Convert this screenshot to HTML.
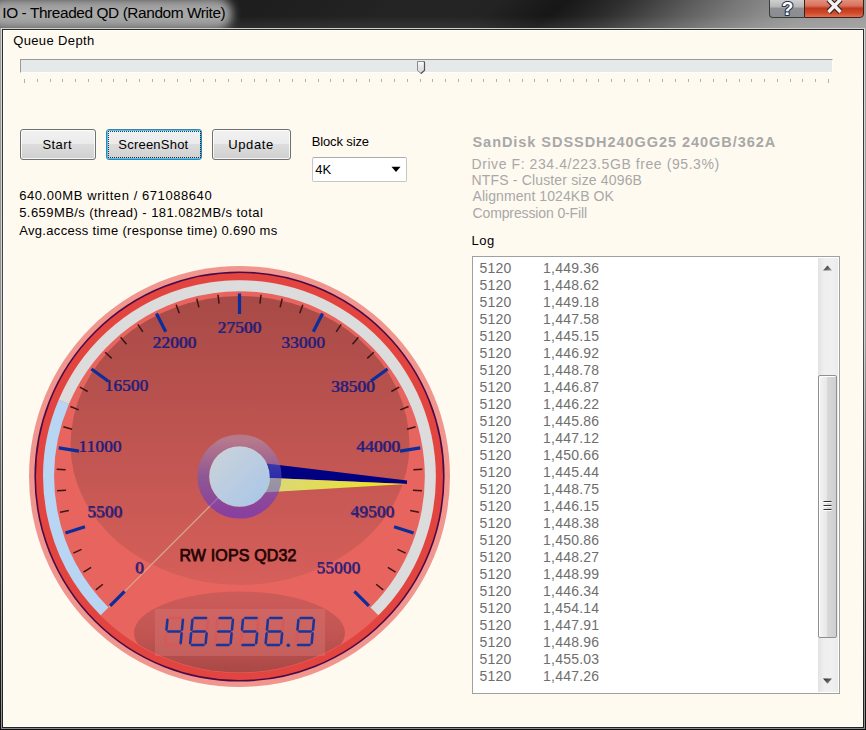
<!DOCTYPE html>
<html><head><meta charset="utf-8"><style>
html,body{margin:0;padding:0;width:866px;height:730px;overflow:hidden;background:#fffaf0;position:relative;}
.t{position:absolute;white-space:nowrap;line-height:1;font-family:"Liberation Sans",sans-serif;}
.abs{position:absolute;}
.gauge{position:absolute;left:0;top:0;}
.gl{font-family:"Liberation Serif",serif;font-size:17px;letter-spacing:0.25px;}
.rw{font-family:"Liberation Sans",sans-serif;font-size:16px;letter-spacing:0.15px;}
.lg{font-size:14px;color:#6e6e6e;letter-spacing:0.2px;}
#tb{left:0;top:0;width:866px;height:28px;background:#1c1c1c;}
#tbg{left:-40px;top:0;width:946px;height:28px;transform:skewX(-48deg);transform-origin:0 100%;background:linear-gradient(90deg,#1c1c1c 0px,#1e1e1e 280px,#242424 420px,#232323 510px,#191919 560px,#171717 575px,#222 605px,#303030 635px,#464646 670px,#606060 710px,#787878 750px,#8c8c8c 790px,#999 830px,#a0a0a0 946px);}
#tbv{left:0;top:0;width:866px;height:28px;background:linear-gradient(rgba(255,255,255,0) 55%,rgba(255,255,255,0.07));}
#glow{left:-12px;top:-3px;width:244px;height:34px;border-radius:16px;background:linear-gradient(#8e8e8e,#a9a9a9 40%,#a9a9a9 62%,#8a8a8a);filter:blur(5px);}
.btn{position:absolute;box-sizing:border-box;height:31px;top:129px;border:1px solid #707070;border-radius:3px;background:linear-gradient(#f2f2f2 0%,#ebebeb 48%,#dddddd 50%,#cfcfcf 100%);box-shadow:inset 0 0 0 1px rgba(255,255,255,0.8);}
</style></head><body>
<div class="abs" id="tb" style="overflow:hidden"><div class="abs" id="tbg"></div><div class="abs" id="tbv"></div><div class="abs" id="glow"></div></div>
<div class="abs" style="left:0;top:28px;width:866px;height:1px;background:#cfcfcf"></div>
<div class="abs" style="left:0;top:29px;width:866px;height:1px;background:#2c2c2c"></div>
<div class="abs" style="left:0;top:28px;width:1px;height:702px;background:linear-gradient(#a0a0a0,#8c8c8e 48%,#282828 85%,#101010)"></div>
<div class="abs" style="left:1px;top:28px;width:1px;height:701px;background:linear-gradient(#d8d8d8,#d0d0d2 48%,#a8a8a8 85%,#909090)"></div>
<div class="abs" style="left:2px;top:29px;width:1px;height:699px;background:linear-gradient(#2a2a2a,#4c4c4c 45%,#282828 85%,#202020)"></div>
<div class="abs" style="left:863px;top:29px;width:1px;height:699px;background:linear-gradient(#2a2a2a,#505050 40%,#282828 85%,#202020)"></div>
<div class="abs" style="left:864px;top:28px;width:1px;height:701px;background:linear-gradient(#d8d8d8,#d0d0d0 45%,#a8a8a8 85%,#909090)"></div>
<div class="abs" style="left:865px;top:28px;width:1px;height:702px;background:linear-gradient(#a0a0a0,#9c9c9c 45%,#282828 85%,#101010)"></div>
<div class="abs" style="left:2px;top:727px;width:862px;height:1px;background:#222"></div>
<div class="abs" style="left:1px;top:728px;width:864px;height:1px;background:#8c8c8c"></div>
<div class="abs" style="left:0;top:729px;width:866px;height:1px;background:#0c0c0c"></div>
<div class="abs" style="left:3px;top:30px;width:860px;height:1px;background:#fffef9"></div>
<div class="abs" style="left:3px;top:30px;width:1px;height:697px;background:#fffef9"></div>
<div class="abs" style="left:862px;top:30px;width:1px;height:697px;background:#fffef9"></div>
<div class="abs" style="left:3px;top:726px;width:860px;height:1px;background:#fffef9"></div>
<!-- caption buttons -->
<div class="abs" style="left:769px;top:-3px;width:35px;height:21px;box-sizing:border-box;border:1px solid #3c3c3c;border-right:none;border-radius:0 0 0 4px;background:linear-gradient(#d6d6d6 0%,#b8b8b8 45%,#8e9094 55%,#8a8c92 100%);"></div>
<div class="abs" style="left:804px;top:-3px;width:60px;height:21px;box-sizing:border-box;border:1px solid #3c2020;border-radius:0 0 4px 0;background:linear-gradient(#e89a88 0%,#d8735e 40%,#c0391c 55%,#d24a2c 80%,#e07050 100%);"></div>
<svg class="abs" style="left:769px;top:0" width="95" height="19" viewBox="0 0 95 19">
<text x="18.6" y="15.2" font-family="Liberation Sans" font-size="19" font-weight="bold" text-anchor="middle" fill="#fff" stroke="#28324e" stroke-width="2.2" paint-order="stroke" stroke-linejoin="round">?</text>
<path d="M59.5,-0.5 L71.5,12 M71.5,-0.5 L59.5,12" stroke="#2e2020" stroke-width="5.6" stroke-linecap="butt"/>
<path d="M59.5,-0.5 L71.5,12 M71.5,-0.5 L59.5,12" stroke="#f2f2f2" stroke-width="3.4" stroke-linecap="butt"/>
</svg>
<!-- slider -->
<div class="abs" style="left:20px;top:59px;width:813px;height:14px;box-sizing:border-box;border-top:1px solid #9a9a9a;border-left:1px solid #9a9a9a;border-bottom:1px solid #fdfdfd;border-right:1px solid #fdfdfd;background:#e6e9ea"></div>
<div style="position:absolute;left:24px;top:79px;width:1px;height:4px;background:#b0b0b0"></div>
<div style="position:absolute;left:37px;top:79px;width:1px;height:3px;background:#b0b0b0"></div>
<div style="position:absolute;left:50px;top:79px;width:1px;height:3px;background:#b0b0b0"></div>
<div style="position:absolute;left:62px;top:79px;width:1px;height:3px;background:#b0b0b0"></div>
<div style="position:absolute;left:75px;top:79px;width:1px;height:3px;background:#b0b0b0"></div>
<div style="position:absolute;left:88px;top:79px;width:1px;height:3px;background:#b0b0b0"></div>
<div style="position:absolute;left:101px;top:79px;width:1px;height:3px;background:#b0b0b0"></div>
<div style="position:absolute;left:113px;top:79px;width:1px;height:3px;background:#b0b0b0"></div>
<div style="position:absolute;left:126px;top:79px;width:1px;height:3px;background:#b0b0b0"></div>
<div style="position:absolute;left:139px;top:79px;width:1px;height:3px;background:#b0b0b0"></div>
<div style="position:absolute;left:152px;top:79px;width:1px;height:3px;background:#b0b0b0"></div>
<div style="position:absolute;left:164px;top:79px;width:1px;height:3px;background:#b0b0b0"></div>
<div style="position:absolute;left:177px;top:79px;width:1px;height:3px;background:#b0b0b0"></div>
<div style="position:absolute;left:190px;top:79px;width:1px;height:3px;background:#b0b0b0"></div>
<div style="position:absolute;left:203px;top:79px;width:1px;height:3px;background:#b0b0b0"></div>
<div style="position:absolute;left:215px;top:79px;width:1px;height:3px;background:#b0b0b0"></div>
<div style="position:absolute;left:228px;top:79px;width:1px;height:3px;background:#b0b0b0"></div>
<div style="position:absolute;left:241px;top:79px;width:1px;height:3px;background:#b0b0b0"></div>
<div style="position:absolute;left:254px;top:79px;width:1px;height:3px;background:#b0b0b0"></div>
<div style="position:absolute;left:266px;top:79px;width:1px;height:3px;background:#b0b0b0"></div>
<div style="position:absolute;left:279px;top:79px;width:1px;height:3px;background:#b0b0b0"></div>
<div style="position:absolute;left:292px;top:79px;width:1px;height:3px;background:#b0b0b0"></div>
<div style="position:absolute;left:305px;top:79px;width:1px;height:3px;background:#b0b0b0"></div>
<div style="position:absolute;left:318px;top:79px;width:1px;height:3px;background:#b0b0b0"></div>
<div style="position:absolute;left:330px;top:79px;width:1px;height:3px;background:#b0b0b0"></div>
<div style="position:absolute;left:343px;top:79px;width:1px;height:3px;background:#b0b0b0"></div>
<div style="position:absolute;left:356px;top:79px;width:1px;height:3px;background:#b0b0b0"></div>
<div style="position:absolute;left:369px;top:79px;width:1px;height:3px;background:#b0b0b0"></div>
<div style="position:absolute;left:381px;top:79px;width:1px;height:3px;background:#b0b0b0"></div>
<div style="position:absolute;left:394px;top:79px;width:1px;height:3px;background:#b0b0b0"></div>
<div style="position:absolute;left:407px;top:79px;width:1px;height:3px;background:#b0b0b0"></div>
<div style="position:absolute;left:420px;top:79px;width:1px;height:3px;background:#b0b0b0"></div>
<div style="position:absolute;left:432px;top:79px;width:1px;height:3px;background:#b0b0b0"></div>
<div style="position:absolute;left:445px;top:79px;width:1px;height:3px;background:#b0b0b0"></div>
<div style="position:absolute;left:458px;top:79px;width:1px;height:3px;background:#b0b0b0"></div>
<div style="position:absolute;left:471px;top:79px;width:1px;height:3px;background:#b0b0b0"></div>
<div style="position:absolute;left:483px;top:79px;width:1px;height:3px;background:#b0b0b0"></div>
<div style="position:absolute;left:496px;top:79px;width:1px;height:3px;background:#b0b0b0"></div>
<div style="position:absolute;left:509px;top:79px;width:1px;height:3px;background:#b0b0b0"></div>
<div style="position:absolute;left:522px;top:79px;width:1px;height:3px;background:#b0b0b0"></div>
<div style="position:absolute;left:534px;top:79px;width:1px;height:3px;background:#b0b0b0"></div>
<div style="position:absolute;left:547px;top:79px;width:1px;height:3px;background:#b0b0b0"></div>
<div style="position:absolute;left:560px;top:79px;width:1px;height:3px;background:#b0b0b0"></div>
<div style="position:absolute;left:573px;top:79px;width:1px;height:3px;background:#b0b0b0"></div>
<div style="position:absolute;left:586px;top:79px;width:1px;height:3px;background:#b0b0b0"></div>
<div style="position:absolute;left:598px;top:79px;width:1px;height:3px;background:#b0b0b0"></div>
<div style="position:absolute;left:611px;top:79px;width:1px;height:3px;background:#b0b0b0"></div>
<div style="position:absolute;left:624px;top:79px;width:1px;height:3px;background:#b0b0b0"></div>
<div style="position:absolute;left:637px;top:79px;width:1px;height:3px;background:#b0b0b0"></div>
<div style="position:absolute;left:649px;top:79px;width:1px;height:3px;background:#b0b0b0"></div>
<div style="position:absolute;left:662px;top:79px;width:1px;height:3px;background:#b0b0b0"></div>
<div style="position:absolute;left:675px;top:79px;width:1px;height:3px;background:#b0b0b0"></div>
<div style="position:absolute;left:688px;top:79px;width:1px;height:3px;background:#b0b0b0"></div>
<div style="position:absolute;left:700px;top:79px;width:1px;height:3px;background:#b0b0b0"></div>
<div style="position:absolute;left:713px;top:79px;width:1px;height:3px;background:#b0b0b0"></div>
<div style="position:absolute;left:726px;top:79px;width:1px;height:3px;background:#b0b0b0"></div>
<div style="position:absolute;left:739px;top:79px;width:1px;height:3px;background:#b0b0b0"></div>
<div style="position:absolute;left:751px;top:79px;width:1px;height:3px;background:#b0b0b0"></div>
<div style="position:absolute;left:764px;top:79px;width:1px;height:3px;background:#b0b0b0"></div>
<div style="position:absolute;left:777px;top:79px;width:1px;height:3px;background:#b0b0b0"></div>
<div style="position:absolute;left:790px;top:79px;width:1px;height:3px;background:#b0b0b0"></div>
<div style="position:absolute;left:802px;top:79px;width:1px;height:3px;background:#b0b0b0"></div>
<div style="position:absolute;left:815px;top:79px;width:1px;height:3px;background:#b0b0b0"></div>
<div style="position:absolute;left:828px;top:79px;width:1px;height:4px;background:#b0b0b0"></div>
<svg class="abs" style="left:414px;top:58px" width="14" height="18" viewBox="0 0 14 18">
<path d="M3.5,3.5 H9.5 Q10.5,3.5 10.5,4.5 V12.5 L7,15.5 L3.5,12.5 Z" fill="url(#thg)" stroke="#8a8a8a" stroke-width="1"/><path d="M9.5,3.5 Q10.5,3.5 10.5,4.5 V12.5 L7,15.5" fill="none" stroke="#555" stroke-width="1.2"/>
<defs><linearGradient id="thg" x1="0" y1="0" x2="0" y2="1"><stop offset="0" stop-color="#fdfdfd"/><stop offset="0.45" stop-color="#e6e6e6"/><stop offset="1" stop-color="#d6d6d6"/></linearGradient></defs>
</svg>
<!-- buttons -->
<div class="btn" style="left:20px;width:76px"></div>
<div class="btn" style="left:106px;width:96px;border-color:#3c7fb1;box-shadow:inset 0 0 0 1px #48c8f5;"></div>
<div class="abs" style="left:108px;top:131px;width:93px;height:27px;background:linear-gradient(90deg,#111 50%,transparent 50%) 0 0/2px 1px repeat-x,linear-gradient(90deg,#111 50%,transparent 50%) 0 100%/2px 1px repeat-x,linear-gradient(#111 50%,transparent 50%) 0 0/1px 2px repeat-y,linear-gradient(#111 50%,transparent 50%) 100% 0/1px 2px repeat-y;opacity:0.85"></div>
<div class="btn" style="left:212px;width:79px"></div>
<!-- combo -->
<div class="abs" style="left:312px;top:157px;width:95px;height:25px;box-sizing:border-box;border:1px solid #c6c6c6;border-top-color:#acacac;background:#fff;border-radius:2px"></div>
<svg class="abs" style="left:390px;top:165px" width="12" height="8" viewBox="0 0 12 8"><path d="M1.5,1.8 H10.5 L6,7 Z" fill="#000"/></svg>
<!-- listbox -->
<div class="abs" style="left:472px;top:256px;width:368px;height:438px;box-sizing:border-box;border:1px solid #a0a0a0;background:#fff"></div>
<div class="abs" style="left:818px;top:258px;width:20px;height:434px;background:linear-gradient(90deg,#e2e2e2,#efefef 30%,#f0f0f0 70%,#ebebeb)"></div>
<div class="abs" style="left:818px;top:375px;width:19px;height:263px;box-sizing:border-box;border:1px solid #8e8f8f;border-radius:2px;background:linear-gradient(90deg,#f4f4f4 0%,#e8e8e8 45%,#d8d8d8 50%,#cfcfcf 100%);box-shadow:inset 1px 1px 0 #fff"></div>
<svg class="abs" style="left:818px;top:258px" width="20" height="434" viewBox="0 0 20 434">
<defs><linearGradient id="ar" x1="0" y1="0" x2="1" y2="1"><stop offset="0" stop-color="#222"/><stop offset="1" stop-color="#9a9a9a"/></linearGradient></defs>
<path d="M5,12.5 L9.5,7.5 L14,12.5 Z" fill="url(#ar)"/>
<path d="M5,420.5 L14,420.5 L9.5,425.8 Z" fill="url(#ar)"/>
<path d="M5.5,243.5 H13.5 M5.5,247.5 H13.5 M5.5,251.5 H13.5" stroke="#333" stroke-width="1.2"/>
<path d="M5.5,244.5 H13.5 M5.5,248.5 H13.5 M5.5,252.5 H13.5" stroke="#fff" stroke-width="1"/>
</svg>
<div class="t lg" style="left:479.6px;top:260.65px">5120</div><div class="t lg" style="left:543.1px;top:260.65px">1,449.36</div>
<div class="t lg" style="left:479.6px;top:277.65px">5120</div><div class="t lg" style="left:543.1px;top:277.65px">1,448.62</div>
<div class="t lg" style="left:479.6px;top:294.65px">5120</div><div class="t lg" style="left:543.1px;top:294.65px">1,449.18</div>
<div class="t lg" style="left:479.6px;top:311.65px">5120</div><div class="t lg" style="left:543.1px;top:311.65px">1,447.58</div>
<div class="t lg" style="left:479.6px;top:328.65px">5120</div><div class="t lg" style="left:543.1px;top:328.65px">1,445.15</div>
<div class="t lg" style="left:479.6px;top:345.65px">5120</div><div class="t lg" style="left:543.1px;top:345.65px">1,446.92</div>
<div class="t lg" style="left:479.6px;top:362.65px">5120</div><div class="t lg" style="left:543.1px;top:362.65px">1,448.78</div>
<div class="t lg" style="left:479.6px;top:379.65px">5120</div><div class="t lg" style="left:543.1px;top:379.65px">1,446.87</div>
<div class="t lg" style="left:479.6px;top:396.65px">5120</div><div class="t lg" style="left:543.1px;top:396.65px">1,446.22</div>
<div class="t lg" style="left:479.6px;top:413.65px">5120</div><div class="t lg" style="left:543.1px;top:413.65px">1,445.86</div>
<div class="t lg" style="left:479.6px;top:430.65px">5120</div><div class="t lg" style="left:543.1px;top:430.65px">1,447.12</div>
<div class="t lg" style="left:479.6px;top:447.65px">5120</div><div class="t lg" style="left:543.1px;top:447.65px">1,450.66</div>
<div class="t lg" style="left:479.6px;top:464.65px">5120</div><div class="t lg" style="left:543.1px;top:464.65px">1,445.44</div>
<div class="t lg" style="left:479.6px;top:481.65px">5120</div><div class="t lg" style="left:543.1px;top:481.65px">1,448.75</div>
<div class="t lg" style="left:479.6px;top:498.65px">5120</div><div class="t lg" style="left:543.1px;top:498.65px">1,446.15</div>
<div class="t lg" style="left:479.6px;top:515.65px">5120</div><div class="t lg" style="left:543.1px;top:515.65px">1,448.38</div>
<div class="t lg" style="left:479.6px;top:532.65px">5120</div><div class="t lg" style="left:543.1px;top:532.65px">1,450.86</div>
<div class="t lg" style="left:479.6px;top:549.65px">5120</div><div class="t lg" style="left:543.1px;top:549.65px">1,448.27</div>
<div class="t lg" style="left:479.6px;top:566.65px">5120</div><div class="t lg" style="left:543.1px;top:566.65px">1,448.99</div>
<div class="t lg" style="left:479.6px;top:583.65px">5120</div><div class="t lg" style="left:543.1px;top:583.65px">1,446.34</div>
<div class="t lg" style="left:479.6px;top:600.65px">5120</div><div class="t lg" style="left:543.1px;top:600.65px">1,454.14</div>
<div class="t lg" style="left:479.6px;top:617.65px">5120</div><div class="t lg" style="left:543.1px;top:617.65px">1,447.91</div>
<div class="t lg" style="left:479.6px;top:634.65px">5120</div><div class="t lg" style="left:543.1px;top:634.65px">1,448.96</div>
<div class="t lg" style="left:479.6px;top:651.65px">5120</div><div class="t lg" style="left:543.1px;top:651.65px">1,455.03</div>
<div class="t lg" style="left:479.6px;top:668.65px">5120</div><div class="t lg" style="left:543.1px;top:668.65px">1,447.26</div>
<svg class="gauge" width="866" height="730" viewBox="0 0 866 730">
<defs>
<linearGradient id="dark" x1="0" y1="0" x2="0" y2="1"><stop offset="0" stop-color="#a84a47"/><stop offset="1" stop-color="#d65f5a"/></linearGradient>
<clipPath id="faceclip"><circle cx="239.5" cy="476.5" r="185"/></clipPath>
<clipPath id="face2clip"><circle cx="239.5" cy="476.5" r="196"/></clipPath>
<linearGradient id="ring" x1="0" y1="0" x2="0" y2="1"><stop offset="0" stop-color="#ae9cc6"/><stop offset="0.5" stop-color="#5a58d2"/><stop offset="1" stop-color="#4a26e6"/></linearGradient>
<linearGradient id="disk" x1="0" y1="0" x2="1" y2="1"><stop offset="0" stop-color="#cdd3d8"/><stop offset="1" stop-color="#a7c6ea"/></linearGradient>
<linearGradient id="yel" x1="0" y1="0" x2="1" y2="0"><stop offset="0" stop-color="#d6d58e"/><stop offset="1" stop-color="#eee41e"/></linearGradient>
<linearGradient id="lcdg" x1="0" y1="0" x2="0" y2="1"><stop offset="0" stop-color="#cd5c59"/><stop offset="0.5" stop-color="#c25552"/><stop offset="1" stop-color="#a84846"/></linearGradient>
</defs>
<circle cx="239.5" cy="476.5" r="210.5" fill="#f0968f"/>
<circle cx="239.5" cy="476.5" r="204.3" fill="#e2443f"/>
<circle cx="239.5" cy="476.5" r="204.3" fill="none" stroke="#4a0a46" stroke-width="1.6"/>
<circle cx="239.5" cy="476.5" r="196.5" fill="#e8645f"/>
<path d="M104.58,611.42 A190.8,190.8 0 0 1 63.87,401.95" fill="none" stroke="#b9d5f4" stroke-width="11"/>
<path d="M63.87,401.95 A190.8,190.8 0 1 1 374.42,611.42" fill="none" stroke="#dcdcdc" stroke-width="11"/>
<g clip-path="url(#faceclip)"><path d="M70.5,445 A169.5,149 0 0 1 409.5,445 A169.5,140 0 0 1 70.5,445 Z" fill="url(#dark)"/></g>
<line x1="218.29" y1="497.71" x2="108.69" y2="607.31" stroke="#d6aa96" stroke-width="1.2"/>
<line x1="124.60" y1="591.40" x2="110.10" y2="605.90" stroke="#0b2e9c" stroke-width="3.2"/>
<line x1="102.85" y1="584.22" x2="95.79" y2="589.79" stroke="#3b1616" stroke-width="1.5"/>
<line x1="91.14" y1="567.41" x2="83.47" y2="572.12" stroke="#3b1616" stroke-width="1.5"/>
<line x1="81.48" y1="549.35" x2="73.31" y2="553.11" stroke="#3b1616" stroke-width="1.5"/>
<line x1="84.95" y1="526.72" x2="65.46" y2="533.05" stroke="#0b2e9c" stroke-width="3.2"/>
<line x1="68.84" y1="510.45" x2="60.02" y2="512.20" stroke="#3b1616" stroke-width="1.5"/>
<line x1="66.04" y1="490.15" x2="57.06" y2="490.86" stroke="#3b1616" stroke-width="1.5"/>
<line x1="65.63" y1="469.67" x2="56.64" y2="469.32" stroke="#3b1616" stroke-width="1.5"/>
<line x1="79.00" y1="451.08" x2="58.75" y2="447.87" stroke="#0b2e9c" stroke-width="3.2"/>
<line x1="72.03" y1="429.27" x2="63.37" y2="426.83" stroke="#3b1616" stroke-width="1.5"/>
<line x1="78.74" y1="409.91" x2="70.43" y2="406.47" stroke="#3b1616" stroke-width="1.5"/>
<line x1="87.69" y1="391.48" x2="79.83" y2="387.08" stroke="#3b1616" stroke-width="1.5"/>
<line x1="108.03" y1="380.98" x2="91.45" y2="368.94" stroke="#0b2e9c" stroke-width="3.2"/>
<line x1="111.73" y1="358.39" x2="105.12" y2="352.28" stroke="#3b1616" stroke-width="1.5"/>
<line x1="126.50" y1="344.19" x2="120.65" y2="337.35" stroke="#3b1616" stroke-width="1.5"/>
<line x1="142.83" y1="331.82" x2="137.83" y2="324.34" stroke="#3b1616" stroke-width="1.5"/>
<line x1="165.73" y1="331.71" x2="156.42" y2="313.45" stroke="#0b2e9c" stroke-width="3.2"/>
<line x1="179.28" y1="313.25" x2="176.16" y2="304.81" stroke="#3b1616" stroke-width="1.5"/>
<line x1="198.88" y1="307.31" x2="196.78" y2="298.56" stroke="#3b1616" stroke-width="1.5"/>
<line x1="219.05" y1="303.71" x2="217.99" y2="294.77" stroke="#3b1616" stroke-width="1.5"/>
<line x1="239.50" y1="314.00" x2="239.50" y2="293.50" stroke="#0b2e9c" stroke-width="3.2"/>
<line x1="259.95" y1="303.71" x2="261.01" y2="294.77" stroke="#3b1616" stroke-width="1.5"/>
<line x1="280.12" y1="307.31" x2="282.22" y2="298.56" stroke="#3b1616" stroke-width="1.5"/>
<line x1="299.72" y1="313.25" x2="302.84" y2="304.81" stroke="#3b1616" stroke-width="1.5"/>
<line x1="313.27" y1="331.71" x2="322.58" y2="313.45" stroke="#0b2e9c" stroke-width="3.2"/>
<line x1="336.17" y1="331.82" x2="341.17" y2="324.34" stroke="#3b1616" stroke-width="1.5"/>
<line x1="352.50" y1="344.19" x2="358.35" y2="337.35" stroke="#3b1616" stroke-width="1.5"/>
<line x1="367.27" y1="358.39" x2="373.88" y2="352.28" stroke="#3b1616" stroke-width="1.5"/>
<line x1="370.97" y1="380.98" x2="387.55" y2="368.94" stroke="#0b2e9c" stroke-width="3.2"/>
<line x1="391.31" y1="391.48" x2="399.17" y2="387.08" stroke="#3b1616" stroke-width="1.5"/>
<line x1="400.26" y1="409.91" x2="408.57" y2="406.47" stroke="#3b1616" stroke-width="1.5"/>
<line x1="406.97" y1="429.27" x2="415.63" y2="426.83" stroke="#3b1616" stroke-width="1.5"/>
<line x1="400.00" y1="451.08" x2="420.25" y2="447.87" stroke="#0b2e9c" stroke-width="3.2"/>
<line x1="413.37" y1="469.67" x2="422.36" y2="469.32" stroke="#3b1616" stroke-width="1.5"/>
<line x1="412.96" y1="490.15" x2="421.94" y2="490.86" stroke="#3b1616" stroke-width="1.5"/>
<line x1="410.16" y1="510.45" x2="418.98" y2="512.20" stroke="#3b1616" stroke-width="1.5"/>
<line x1="394.05" y1="526.72" x2="413.54" y2="533.05" stroke="#0b2e9c" stroke-width="3.2"/>
<line x1="397.52" y1="549.35" x2="405.69" y2="553.11" stroke="#3b1616" stroke-width="1.5"/>
<line x1="387.86" y1="567.41" x2="395.53" y2="572.12" stroke="#3b1616" stroke-width="1.5"/>
<line x1="376.15" y1="584.22" x2="383.21" y2="589.79" stroke="#3b1616" stroke-width="1.5"/>
<line x1="354.40" y1="591.40" x2="368.90" y2="605.90" stroke="#0b2e9c" stroke-width="3.2"/>
<text x="140.35" y="573.60" text-anchor="middle" class="gl" fill="#4a0c3c" fill-opacity="0.7">0</text>
<text x="139.45" y="573.30" text-anchor="middle" class="gl" fill="#1c2690" stroke="#1c1c78" stroke-width="0.2">0</text>
<text x="105.65" y="517.70" text-anchor="middle" class="gl" fill="#4a0c3c" fill-opacity="0.7">5500</text>
<text x="104.75" y="517.40" text-anchor="middle" class="gl" fill="#1c2690" stroke="#1c1c78" stroke-width="0.2">5500</text>
<text x="100.80" y="451.90" text-anchor="middle" class="gl" fill="#4a0c3c" fill-opacity="0.7">11000</text>
<text x="99.90" y="451.60" text-anchor="middle" class="gl" fill="#1c2690" stroke="#1c1c78" stroke-width="0.2">11000</text>
<text x="127.20" y="391.40" text-anchor="middle" class="gl" fill="#4a0c3c" fill-opacity="0.7">16500</text>
<text x="126.30" y="391.10" text-anchor="middle" class="gl" fill="#1c2690" stroke="#1c1c78" stroke-width="0.2">16500</text>
<text x="175.35" y="348.30" text-anchor="middle" class="gl" fill="#4a0c3c" fill-opacity="0.7">22000</text>
<text x="174.45" y="348.00" text-anchor="middle" class="gl" fill="#1c2690" stroke="#1c1c78" stroke-width="0.2">22000</text>
<text x="240.35" y="332.80" text-anchor="middle" class="gl" fill="#4a0c3c" fill-opacity="0.7">27500</text>
<text x="239.45" y="332.50" text-anchor="middle" class="gl" fill="#1c2690" stroke="#1c1c78" stroke-width="0.2">27500</text>
<text x="303.90" y="348.30" text-anchor="middle" class="gl" fill="#4a0c3c" fill-opacity="0.7">33000</text>
<text x="303.00" y="348.00" text-anchor="middle" class="gl" fill="#1c2690" stroke="#1c1c78" stroke-width="0.2">33000</text>
<text x="353.80" y="391.80" text-anchor="middle" class="gl" fill="#4a0c3c" fill-opacity="0.7">38500</text>
<text x="352.90" y="391.50" text-anchor="middle" class="gl" fill="#1c2690" stroke="#1c1c78" stroke-width="0.2">38500</text>
<text x="379.10" y="451.90" text-anchor="middle" class="gl" fill="#4a0c3c" fill-opacity="0.7">44000</text>
<text x="378.20" y="451.60" text-anchor="middle" class="gl" fill="#1c2690" stroke="#1c1c78" stroke-width="0.2">44000</text>
<text x="373.25" y="517.70" text-anchor="middle" class="gl" fill="#4a0c3c" fill-opacity="0.7">49500</text>
<text x="372.35" y="517.40" text-anchor="middle" class="gl" fill="#1c2690" stroke="#1c1c78" stroke-width="0.2">49500</text>
<text x="339.20" y="573.60" text-anchor="middle" class="gl" fill="#4a0c3c" fill-opacity="0.7">55000</text>
<text x="338.30" y="573.30" text-anchor="middle" class="gl" fill="#1c2690" stroke="#1c1c78" stroke-width="0.2">55000</text>
<text x="238" y="560.6" text-anchor="middle" class="rw" fill="#240404" stroke="#240404" stroke-width="0.75">RW IOPS QD32</text>
<g clip-path="url(#face2clip)"><ellipse cx="239.5" cy="633" rx="105.5" ry="41.5" fill="url(#lcdg)"/></g>
<rect x="155" y="609" width="170" height="47" fill="#d77574" fill-opacity="0.45"/>
<polygon points="167.95,618.00 169.10,619.27 181.35,619.27 182.75,618.00 181.60,616.73 169.35,616.73" fill="#d65858"/>
<polygon points="165.35,645.00 166.50,646.27 178.75,646.27 180.15,645.00 179.00,643.73 166.75,643.73" fill="#d65858"/>
<polygon points="166.65,631.50 167.80,632.77 180.05,632.77 181.45,631.50 180.30,630.23 168.05,630.23" fill="#18359a"/>
<polygon points="166.33,631.15 167.73,629.88 168.72,619.62 167.57,618.35 166.17,619.62 165.18,629.88" fill="#18359a"/>
<polygon points="165.03,644.65 166.43,643.38 167.42,633.12 166.27,631.85 164.87,633.12 163.88,643.38" fill="#d65858"/>
<polygon points="181.83,631.15 183.23,629.88 184.22,619.62 183.07,618.35 181.67,619.62 180.68,629.88" fill="#18359a"/>
<polygon points="180.53,644.65 181.93,643.38 182.92,633.12 181.77,631.85 180.37,633.12 179.38,643.38" fill="#18359a"/>
<polygon points="192.95,618.00 194.10,619.27 206.35,619.27 207.75,618.00 206.60,616.73 194.35,616.73" fill="#18359a"/>
<polygon points="190.35,645.00 191.50,646.27 203.75,646.27 205.15,645.00 204.00,643.73 191.75,643.73" fill="#18359a"/>
<polygon points="191.65,631.50 192.80,632.77 205.05,632.77 206.45,631.50 205.30,630.23 193.05,630.23" fill="#18359a"/>
<polygon points="191.33,631.15 192.73,629.88 193.72,619.62 192.57,618.35 191.17,619.62 190.18,629.88" fill="#18359a"/>
<polygon points="190.03,644.65 191.43,643.38 192.42,633.12 191.27,631.85 189.87,633.12 188.88,643.38" fill="#18359a"/>
<polygon points="206.83,631.15 208.23,629.88 209.22,619.62 208.07,618.35 206.67,619.62 205.68,629.88" fill="#d65858"/>
<polygon points="205.53,644.65 206.93,643.38 207.92,633.12 206.77,631.85 205.37,633.12 204.38,643.38" fill="#18359a"/>
<polygon points="217.95,618.00 219.10,619.27 231.35,619.27 232.75,618.00 231.60,616.73 219.35,616.73" fill="#18359a"/>
<polygon points="215.35,645.00 216.50,646.27 228.75,646.27 230.15,645.00 229.00,643.73 216.75,643.73" fill="#18359a"/>
<polygon points="216.65,631.50 217.80,632.77 230.05,632.77 231.45,631.50 230.30,630.23 218.05,630.23" fill="#18359a"/>
<polygon points="216.33,631.15 217.73,629.88 218.72,619.62 217.57,618.35 216.17,619.62 215.18,629.88" fill="#d65858"/>
<polygon points="215.03,644.65 216.43,643.38 217.42,633.12 216.27,631.85 214.87,633.12 213.88,643.38" fill="#d65858"/>
<polygon points="231.83,631.15 233.23,629.88 234.22,619.62 233.07,618.35 231.67,619.62 230.68,629.88" fill="#18359a"/>
<polygon points="230.53,644.65 231.93,643.38 232.92,633.12 231.77,631.85 230.37,633.12 229.38,643.38" fill="#18359a"/>
<polygon points="243.45,618.00 244.60,619.27 256.85,619.27 258.25,618.00 257.10,616.73 244.85,616.73" fill="#18359a"/>
<polygon points="240.85,645.00 242.00,646.27 254.25,646.27 255.65,645.00 254.50,643.73 242.25,643.73" fill="#18359a"/>
<polygon points="242.15,631.50 243.30,632.77 255.55,632.77 256.95,631.50 255.80,630.23 243.55,630.23" fill="#18359a"/>
<polygon points="241.83,631.15 243.23,629.88 244.22,619.62 243.07,618.35 241.67,619.62 240.68,629.88" fill="#18359a"/>
<polygon points="240.53,644.65 241.93,643.38 242.92,633.12 241.77,631.85 240.37,633.12 239.38,643.38" fill="#d65858"/>
<polygon points="257.33,631.15 258.73,629.88 259.72,619.62 258.57,618.35 257.17,619.62 256.18,629.88" fill="#d65858"/>
<polygon points="256.03,644.65 257.43,643.38 258.42,633.12 257.27,631.85 255.87,633.12 254.88,643.38" fill="#18359a"/>
<polygon points="268.45,618.00 269.60,619.27 281.85,619.27 283.25,618.00 282.10,616.73 269.85,616.73" fill="#18359a"/>
<polygon points="265.85,645.00 267.00,646.27 279.25,646.27 280.65,645.00 279.50,643.73 267.25,643.73" fill="#18359a"/>
<polygon points="267.15,631.50 268.30,632.77 280.55,632.77 281.95,631.50 280.80,630.23 268.55,630.23" fill="#18359a"/>
<polygon points="266.83,631.15 268.23,629.88 269.22,619.62 268.07,618.35 266.67,619.62 265.68,629.88" fill="#18359a"/>
<polygon points="265.53,644.65 266.93,643.38 267.92,633.12 266.77,631.85 265.37,633.12 264.38,643.38" fill="#18359a"/>
<polygon points="282.33,631.15 283.73,629.88 284.72,619.62 283.57,618.35 282.17,619.62 281.18,629.88" fill="#d65858"/>
<polygon points="281.03,644.65 282.43,643.38 283.42,633.12 282.27,631.85 280.87,633.12 279.88,643.38" fill="#18359a"/>
<polygon points="298.95,618.00 300.10,619.27 312.35,619.27 313.75,618.00 312.60,616.73 300.35,616.73" fill="#18359a"/>
<polygon points="296.35,645.00 297.50,646.27 309.75,646.27 311.15,645.00 310.00,643.73 297.75,643.73" fill="#18359a"/>
<polygon points="297.65,631.50 298.80,632.77 311.05,632.77 312.45,631.50 311.30,630.23 299.05,630.23" fill="#18359a"/>
<polygon points="297.33,631.15 298.73,629.88 299.72,619.62 298.57,618.35 297.17,619.62 296.18,629.88" fill="#18359a"/>
<polygon points="296.03,644.65 297.43,643.38 298.42,633.12 297.27,631.85 295.87,633.12 294.88,643.38" fill="#d65858"/>
<polygon points="312.83,631.15 314.23,629.88 315.22,619.62 314.07,618.35 312.67,619.62 311.68,629.88" fill="#18359a"/>
<polygon points="311.53,644.65 312.93,643.38 313.92,633.12 312.77,631.85 311.37,633.12 310.38,643.38" fill="#18359a"/>
<circle cx="288.3" cy="645.3" r="1.8" fill="#18359a"/>
<polygon points="240.23,460.22 407.09,480.42 406.93,484.02 239.5,476.5" fill="#000080"/>
<polygon points="239.5,476.5 406.93,484.02 238.72,493.98" fill="url(#yel)"/>
<circle cx="239.5" cy="476.5" r="36.3" fill="none" stroke="url(#ring)" stroke-width="11.6" stroke-opacity="0.5"/>
<circle cx="239.5" cy="476.5" r="30.3" fill="url(#disk)"/>
</svg>
<div class="t" style="left:2.30px;top:4.96px;font-size:15.4px;font-weight:normal;color:#000;letter-spacing:-0.402px;">IO - Threaded QD (Random Write)</div>
<div class="t" style="left:13.20px;top:33.50px;font-size:13px;font-weight:normal;color:#000;letter-spacing:0.370px;">Queue Depth</div>
<div class="t" style="left:42.40px;top:137.50px;font-size:13px;font-weight:normal;color:#000;letter-spacing:0.465px;">Start</div>
<div class="t" style="left:118.30px;top:137.50px;font-size:13px;font-weight:normal;color:#000;letter-spacing:0.220px;">ScreenShot</div>
<div class="t" style="left:228.30px;top:137.80px;font-size:13px;font-weight:normal;color:#000;letter-spacing:0.582px;">Update</div>
<div class="t" style="left:311.70px;top:134.80px;font-size:13px;font-weight:normal;color:#000;letter-spacing:-0.132px;">Block size</div>
<div class="t" style="left:315.20px;top:162.70px;font-size:13px;font-weight:normal;color:#000;letter-spacing:0.170px;">4K</div>
<div class="t" style="left:19.20px;top:188.70px;font-size:13px;font-weight:normal;color:#000;letter-spacing:0.569px;">640.00MB written / 671088640</div>
<div class="t" style="left:19.20px;top:205.50px;font-size:13px;font-weight:normal;color:#000;letter-spacing:0.434px;">5.659MB/s (thread) - 181.082MB/s total</div>
<div class="t" style="left:19.20px;top:224.40px;font-size:13px;font-weight:normal;color:#000;letter-spacing:0.325px;">Avg.access time (response time) 0.690 ms</div>
<div class="t" style="left:472.50px;top:135.13px;font-size:14.5px;font-weight:bold;color:#a8a8a8;letter-spacing:0.950px;">SanDisk SDSSDH240GG25 240GB/362A</div>
<div class="t" style="left:471.50px;top:156.75px;font-size:14px;font-weight:normal;color:#a8a8a8;letter-spacing:0.578px;">Drive F: 234.4/223.5GB free (95.3%)</div>
<div class="t" style="left:471.50px;top:172.55px;font-size:14px;font-weight:normal;color:#a8a8a8;letter-spacing:0.164px;">NTFS - Cluster size 4096B</div>
<div class="t" style="left:472.50px;top:188.55px;font-size:14px;font-weight:normal;color:#a8a8a8;letter-spacing:0.070px;">Alignment 1024KB OK</div>
<div class="t" style="left:472.50px;top:205.55px;font-size:14px;font-weight:normal;color:#a8a8a8;letter-spacing:-0.123px;">Compression 0-Fill</div>
<div class="t" style="left:471.50px;top:233.80px;font-size:13px;font-weight:normal;color:#000;letter-spacing:0.520px;">Log</div>
</body></html>
